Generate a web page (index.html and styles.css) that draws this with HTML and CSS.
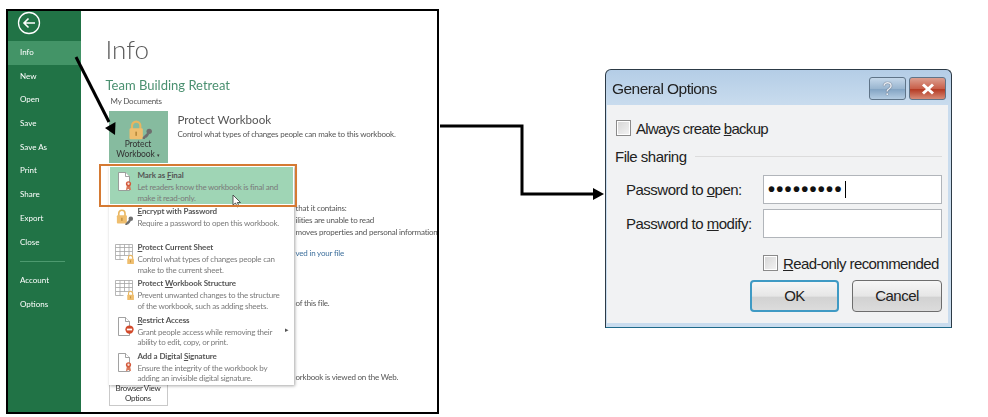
FILE: index.html
```html
<!DOCTYPE html>
<html lang="en">
<head>
    <meta charset="UTF-8">
    <title>Mark as Final and General Options</title>
    <link rel="stylesheet" href="styles.css">
</head>
<body>

<svg class="defs" width="0" height="0">
    <defs>
        <symbol id="lock" viewBox="0 0 24 24">
            <path d="M6 11V7a5 5 0 0 1 10 0v4" fill="none" stroke="#e8b660" stroke-width="2.6"/>
            <rect x="3" y="10" width="16" height="13" rx="1.5" fill="#efbe6e"/>
            <rect x="10" y="14" width="2" height="5" fill="#b98a3c"/>
        </symbol>
        <symbol id="key" viewBox="0 0 24 24">
            <circle cx="17" cy="8" r="5" fill="#6e6e6e"/>
            <path d="M14 10 5 19v3h4l1-2h2l1-2h1l3-5z" fill="#6e6e6e"/>
        </symbol>
        <symbol id="page" viewBox="0 0 12 19">
            <path d="M.5.500h7l4 4v14H.5z" fill="#fff" stroke="#8a8a8a" stroke-width=".8"/>
            <path d="M7.500.500v4h4" fill="#fff" stroke="#8a8a8a" stroke-width=".8"/>
        </symbol>
        <symbol id="ribbon" viewBox="0 0 12 18">
            <path d="M3 10 1.500 17 6 15 10.500 17 9 10z" fill="#d9785a"/>
            <circle cx="6" cy="6" r="4.500" fill="#d4593b"/>
            <circle cx="6" cy="6" r="2" fill="#f6e1d8"/>
        </symbol>
        <symbol id="grid" viewBox="0 0 18 18">
            <path d="M.5.500h17v11H.5zM.5 3.500h17M.5 7.500h17M5 .5v15M9.500.500v11M14 .5v11M.5 11.500v4h8" fill="#fff" stroke="#a5a5a5" stroke-width=".8"/>
        </symbol>
        <symbol id="noentry" viewBox="0 0 12 12">
            <circle cx="6" cy="6" r="5.500" fill="#d2492a"/>
            <rect x="2.500" y="4.800" width="7" height="2.400" fill="#fff"/>
        </symbol>
    </defs>
</svg>

<div class="canvas">

    <!-- excel backstage -->
    <section class="excel">
        <aside class="sidebar">
            <div class="back">
                <svg width="24" height="24" viewBox="0 0 24 24">
                    <circle cx="12" cy="12" r="10.500" fill="none" stroke="#fff" stroke-width="1.300"/>
                    <path d="M18 12H7M11.500 7.500 7 12l4.500 4.500" fill="none" stroke="#fff" stroke-width="1.600"/>
                </svg>
            </div>
            <nav class="nav">
                <div class="nav-item active">Info</div>
                <div class="nav-item">New</div>
                <div class="nav-item">Open</div>
                <div class="nav-item">Save</div>
                <div class="nav-item">Save As</div>
                <div class="nav-item">Print</div>
                <div class="nav-item">Share</div>
                <div class="nav-item">Export</div>
                <div class="nav-item">Close</div>
                <div class="nav-line"></div>
                <div class="nav-item">Account</div>
                <div class="nav-item">Options</div>
            </nav>
        </aside>

        <main class="info">
            <h1>Info</h1>
            <h2>Team Building Retreat</h2>
            <p class="path">My Documents</p>

            <div class="protect">
                <div class="tile tile-on">
                    <span class="tile-icon">
                        <svg class="tile-lock" width="20" height="20"><use href="#lock"/></svg>
                        <svg class="tile-key" width="13" height="13"><use href="#key"/></svg>
                    </span>
                    <span>Protect<br>Workbook <small>▾</small></span>
                </div>
                <div class="protect-text">
                    <h3>Protect Workbook</h3>
                    <p>Control what types of changes people can make to this workbook.</p>
                </div>
            </div>

            <div class="notes">
                <p>that it contains:</p>
                <p>ilities are unable to read</p>
                <p>moves properties and personal information</p>
                <p class="note-link">ved in your file</p>
                <p class="note-file">of this file.</p>
                <p class="note-web">orkbook is viewed on the Web.</p>
            </div>

            <div class="tile tile-off">Browser View<br>Options</div>

            <!-- dropdown under protect workbook -->
            <div class="menu">
                <div class="menu-item hot">
                    <div class="menu-icon">
                        <svg class="ic-page" width="12" height="19"><use href="#page"/></svg>
                        <svg class="ic-badge" width="7" height="11"><use href="#ribbon"/></svg>
                    </div>
                    <div>
                        <h4>Mark as <u>F</u>inal</h4>
                        <p>Let readers know the workbook is final and<br>make it read-only.</p>
                    </div>
                    <svg class="cursor" width="10" height="14" viewBox="0 0 10 14">
                        <path d="M1 1v10l2.500-2 1.800 4 1.800-.8L5.300 8.500H8.500z" fill="#fff" stroke="#333" stroke-width=".8"/>
                    </svg>
                </div>
                <div class="menu-item">
                    <div class="menu-icon">
                        <svg class="ic-lock" width="15" height="17"><use href="#lock"/></svg>
                        <svg class="ic-key" width="11" height="11"><use href="#key"/></svg>
                    </div>
                    <div>
                        <h4><u>E</u>ncrypt with Password</h4>
                        <p>Require a password to open this workbook.</p>
                    </div>
                </div>
                <div class="menu-item">
                    <div class="menu-icon">
                        <svg class="ic-grid" width="18" height="18"><use href="#grid"/></svg>
                        <svg class="ic-small-lock" width="10" height="11"><use href="#lock"/></svg>
                    </div>
                    <div>
                        <h4><u>P</u>rotect Current Sheet</h4>
                        <p>Control what types of changes people can<br>make to the current sheet.</p>
                    </div>
                </div>
                <div class="menu-item">
                    <div class="menu-icon">
                        <svg class="ic-grid" width="18" height="18"><use href="#grid"/></svg>
                        <svg class="ic-small-lock" width="10" height="11"><use href="#lock"/></svg>
                    </div>
                    <div>
                        <h4>Protect <u>W</u>orkbook Structure</h4>
                        <p>Prevent unwanted changes to the structure<br>of the workbook, such as adding sheets.</p>
                    </div>
                </div>
                <div class="menu-item">
                    <div class="menu-icon">
                        <svg class="ic-page" width="12" height="19"><use href="#page"/></svg>
                        <svg class="ic-stop" width="9" height="9"><use href="#noentry"/></svg>
                    </div>
                    <div>
                        <h4><u>R</u>estrict Access</h4>
                        <p>Grant people access while removing their<br>ability to edit, copy, or print.</p>
                    </div>
                    <span class="more">▸</span>
                </div>
                <div class="menu-item">
                    <div class="menu-icon">
                        <svg class="ic-page" width="12" height="19"><use href="#page"/></svg>
                        <svg class="ic-badge" width="7" height="11"><use href="#ribbon"/></svg>
                    </div>
                    <div>
                        <h4>Add a Digital <u>S</u>ignature</h4>
                        <p>Ensure the integrity of the workbook by<br>adding an invisible digital signature.</p>
                    </div>
                </div>
            </div>
        </main>
    </section>

    <!-- password dialog -->
    <section class="dialog">
        <header class="dialog-title">
            <span>General Options</span>
            <div class="caption-btns">
                <div class="caption-btn help">?</div>
                <div class="caption-btn close">
                    <svg width="14" height="12" viewBox="0 0 14 12"><path d="M2 1.500 12 10.500M12 1.500 2 10.500" stroke="#fff" stroke-width="3"/></svg>
                </div>
            </div>
        </header>
        <div class="dialog-body">
            <label class="check check-top"><span class="box"></span><span>Always create <u>b</u>ackup</span></label>
            <div class="group"><span>File sharing</span><i></i></div>
            <div class="field">
                <label>Password to <u>o</u>pen:</label>
                <div class="input"><span class="dots">•••••••••</span><span class="caret"></span></div>
            </div>
            <div class="field">
                <label>Password to <u>m</u>odify:</label>
                <div class="input"></div>
            </div>
            <label class="check check-right"><span class="box"></span><span><u>R</u>ead-only recommended</span></label>
            <div class="buttons">
                <div class="btn btn-ok">OK</div>
                <div class="btn">Cancel</div>
            </div>
        </div>
    </section>

    <!-- arrows on top of everything -->
    <svg class="arrows" width="988" height="417" viewBox="0 0 988 417">
        <path d="M76 57 109 122" fill="none" stroke="#000" stroke-width="3"/>
        <path d="M115 135 105 128 115.500 122z" fill="#000"/>
        <path d="M440 126H522V194H595" fill="none" stroke="#000" stroke-width="3"/>
        <path d="M604 194 593 188V200z" fill="#000"/>
    </svg>
</div>

</body>
</html>
```

FILE: styles.css
```css
* {
    box-sizing: border-box;
}

html, body {
    margin: 0;
    padding: 0;
    background: white;
}

.defs {
    display: block;
    height: 0;
}

.canvas {
    position: relative;
    width: 988px;
    height: 417px;
    overflow: hidden;
    font-family: "Lato", sans-serif;
}

.arrows {
    position: absolute;
    left: 0;
    top: 0;
}

/* excel window */
.excel {
    position: absolute;
    left: 6px;
    top: 9px;
    width: 433px;
    height: 405px;
    display: flex;
    border: 2px solid black;
    background: white;
    overflow: hidden;
}

.sidebar {
    width: 72.500px;
    flex: none;
    background: #217346;
    color: white;
    filter: blur(0.3px);
}

.back {
    height: 30px;
    padding: 0 0 0 9px;
    margin-top: -3px;
    display: flex;
    align-items: center;
}

.nav {
    margin-top: 3px;
}

.nav-item {
    height: 23.700px;
    line-height: 23.700px;
    padding-left: 12px;
    font-size: 8px;
}

.nav-item.active {
    background: #439467;
}

.nav-line {
    height: 1px;
    margin: 7px 16px 7px 12px;
    background: #4d9a6f;
}

.info {
    position: relative;
    flex: 1;
    min-width: 0;
    padding-left: 25px;
    overflow: hidden;
    filter: blur(0.3px);
}

h1 {
    margin: 20px 0 0;
    height: 36px;
    font-size: 26px;
    line-height: 36px;
    font-weight: 300;
    color: #5a5a5a;
}

h2 {
    margin: 8px 0 0;
    font-size: 13px;
    line-height: 20px;
    font-weight: 400;
    color: #4a9070;
}

.path {
    margin: 0 0 0 5px;
    font-size: 8px;
    letter-spacing: -0.2px;
    line-height: 12px;
    color: #555;
}

.protect {
    display: flex;
    gap: 10px;
    margin: 4px 0 0 3px;
}

.tile {
    width: 59px;
    flex: none;
    text-align: center;
    font-size: 8.500px;
    color: #333;
}

.tile-on {
    height: 52px;
    background: #86bb9f;
    display: flex;
    flex-direction: column;
    align-items: center;
    padding-top: 9px;
    line-height: 9.500px;
    letter-spacing: -0.1px;
}

.tile-on small {
    font-size: 5px;
}

.tile-icon {
    position: relative;
    width: 26px;
    height: 20px;
    flex: none;
}

.tile-lock {
    position: absolute;
    left: 2px;
    top: 0;
}

.tile-key {
    position: absolute;
    right: -2px;
    bottom: 0;
}

.protect-text h3 {
    margin: 1px 0 0;
    font-size: 11.600px;
    line-height: 16px;
    font-weight: 400;
    color: #555;
}

.protect-text p {
    margin: 0;
    font-size: 8px;
    letter-spacing: -0.2px;
    line-height: 12px;
    color: #555;
}

.notes {
    height: 215px;
    padding: 39px 0 0 190px;
    font-size: 8px;
    letter-spacing: -0.2px;
    line-height: 12px;
    color: #555;
    white-space: nowrap;
}

.notes p {
    margin: 0;
}

.notes .note-link {
    margin-top: 9px;
    color: #3d6f9c;
}

.notes .note-file {
    margin-top: 38px;
}

.notes .note-web {
    margin-top: 62px;
}

.tile-off {
    height: 28px;
    margin: 0 0 0 3px;
    padding-top: 5px;
    font-size: 8px;
    letter-spacing: -0.3px;
    line-height: 10px;
    border: 1px solid #c9c9c9;
    border-top: none;
}

/* dropdown */
.menu {
    position: absolute;
    left: 28px;
    top: 155px;
    width: 185px;
    height: 219px;
    padding: 1px;
    background: white;
    box-shadow: 1px 1px 3px rgba(0, 0, 0, 0.35);
}

.menu-item {
    position: relative;
    display: flex;
    height: 36.200px;
    padding: 2px 0 0 4px;
}

.menu-item.hot {
    height: 37px;
    padding-top: 3px;
    background: #9fd5b5;
}

.menu-item.hot::after {
    content: "";
    position: absolute;
    left: -11px;
    top: -3px;
    right: -4px;
    bottom: -3px;
    border: 2.500px solid #d57a33;
}

.menu-icon {
    position: relative;
    width: 24px;
    height: 30px;
    flex: none;
}

.ic-page {
    position: absolute;
    left: 4px;
    top: 2px;
}

.ic-badge {
    position: absolute;
    left: 11px;
    top: 10px;
}

.ic-stop {
    position: absolute;
    left: 11px;
    top: 10px;
}

.ic-lock {
    position: absolute;
    left: 1px;
    top: 2px;
}

.ic-key {
    position: absolute;
    left: 9px;
    top: 9px;
}

.ic-grid {
    position: absolute;
    left: 1px;
    top: 2px;
}

.ic-small-lock {
    position: absolute;
    left: 12px;
    top: 12px;
}

.menu-item h4 {
    margin: 0;
    font-size: 8px;
    letter-spacing: -0.1px;
    line-height: 11px;
    font-weight: 700;
    color: #555;
}

.menu-item p {
    margin: 1px 0 0;
    font-size: 8px;
    letter-spacing: -0.24px;
    line-height: 10.500px;
    color: #7a7a7a;
    white-space: nowrap;
}

.more {
    position: absolute;
    right: 4px;
    top: 12px;
    font-size: 7px;
    color: #555;
}

.cursor {
    position: absolute;
    left: 122px;
    top: 27px;
}

/* general options dialog */
.dialog {
    position: absolute;
    left: 605px;
    top: 69px;
    width: 347px;
    height: 259px;
    border: 1px solid #2c3a46;
    border-bottom-color: #1f6a8a;
    border-radius: 6px 6px 0 0;
    background: linear-gradient(#b4cde6, #c9dcee 36px);
    display: flex;
    flex-direction: column;
    font-family: "Liberation Sans", sans-serif;
    color: #222;
    padding: 0 3px 4px 1px;
    filter: blur(0.3px);
}

.dialog-title {
    height: 35px;
    flex: none;
    display: flex;
    justify-content: space-between;
    padding: 7px 2px 0 5px;
    font-size: 15.500px;
    letter-spacing: -0.55px;
    line-height: 24px;
}

.caption-btns {
    display: flex;
    gap: 3px;
    letter-spacing: 0;
}

.caption-btn {
    width: 37px;
    height: 23px;
    border: 1px solid #5f7488;
    border-radius: 3px;
    display: flex;
    align-items: center;
    justify-content: center;
}

.help {
    background: linear-gradient(#c5d8ea, #9ab6d0 50%, #84a5c4 55%, #b4cce2);
    color: #e8eef5;
    font-size: 18px;
    text-shadow: 0 0 1px #223;
}

.close {
    background: linear-gradient(#dc9f90, #c9604b 50%, #b53c25 55%, #d78c78);
}

.dialog-body {
    flex: 1;
    background: #f1f2f3;
    padding: 13px 6px 0 9px;
    font-size: 15px;
    letter-spacing: -0.5px;
    display: flex;
    flex-direction: column;
}

.check {
    display: flex;
    align-items: center;
    gap: 5px;
    height: 20px;
    white-space: nowrap;
}

.check-top {
    letter-spacing: -0.7px;
}

.box {
    width: 15px;
    height: 16px;
    flex: none;
    border: 1px solid #8a8a8a;
    background: linear-gradient(135deg, #d5d5d5, #f4f4f4);
    box-shadow: inset 0 0 0 1px #fff;
}

.group {
    display: flex;
    align-items: center;
    gap: 8px;
    height: 20px;
    margin: 8px 0 0 -1px;
}

.group i {
    flex: 1;
    height: 1px;
    background: #dcdcdc;
}

.field {
    display: flex;
    align-items: center;
    height: 29px;
    margin-top: 9px;
    padding-left: 10px;
}

.field + .field {
    margin-top: 5px;
}

.field label {
    width: 137px;
    flex: none;
}

.input {
    flex: 1;
    height: 29px;
    display: flex;
    align-items: center;
    padding-left: 4px;
    background: white;
    border: 1px solid #b1b5ba;
}

.dots {
    letter-spacing: 1.300px;
    font-size: 20px;
    width: 77px;
    white-space: nowrap;
    color: #111;
    font-weight: 700;
}

.caret {
    width: 1px;
    height: 17px;
    background: black;
}

.check-right {
    margin: 15px 0 0 147px;
    letter-spacing: -0.6px;
}

.buttons {
    display: flex;
    gap: 13px;
    margin: 7px 0 0 134px;
}

.btn {
    width: 90px;
    height: 32px;
    line-height: 30px;
    text-align: center;
    border: 1px solid #6d6d6d;
    border-radius: 4px;
    background: linear-gradient(#f6f6f6, #e6e6e6 50%, #d2d2d2 55%, #dcdcdc);
}

.btn-ok {
    width: 89px;
    border: 2px solid #3f9ac4;
    line-height: 28px;
}
```
